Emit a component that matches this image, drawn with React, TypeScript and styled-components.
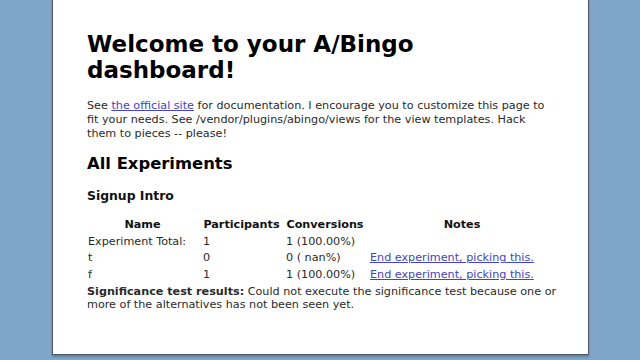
import React from 'react';
import styled, { createGlobalStyle } from 'styled-components';

const GlobalStyle = createGlobalStyle`
  html, body {
    margin: 0;
    padding: 0;
    background: #7fa6c8;
    font-family: "DejaVu Sans", Verdana, sans-serif;
    color: #222;
  }
`;

const Page = styled.div`
  width: 640px;
  height: 360px;
  overflow: hidden;
`;

const Panel = styled.div`
  box-sizing: border-box;
  margin-left: 52px;
  width: 537px;
  height: 355px;
  background: #fff;
  border: 1px solid #4d5866;
  border-top: none;
  box-shadow: 0 2px 2px rgba(40, 60, 80, 0.35);
  padding: 31px 10px 0 34px;
`;

const Title = styled.h1`
  margin: 0;
  font-size: 23px;
  line-height: 26px;
  font-weight: bold;
  color: #000;
`;

const Intro = styled.p`
  margin: 16px 0 0;
  font-size: 11.2px;
  line-height: 14px;
  color: #2a2a2a;
`;

const Link = styled.a`
  color: #4343c4;
  text-decoration: underline;
`;

const SectionTitle = styled.h2`
  margin: 12px 0 0;
  font-size: 16.4px;
  line-height: 22px;
  font-weight: bold;
  color: #000;
`;

const SubTitle = styled.h3`
  margin: 13px 0 0;
  font-size: 12.4px;
  line-height: 16px;
  font-weight: bold;
  color: #111;
`;

const Table = styled.table`
  margin-top: 12px;
  border-collapse: collapse;
  table-layout: fixed;
  font-size: 11.2px;
  color: #2a2a2a;
`;

const Th = styled.th`
  padding: 0 4px 0 0;
  height: 17px;
  font-weight: bold;
  text-align: center;
  color: #111;
`;

const Td = styled.td`
  padding: 0 1px;
  height: 16.6px;
  text-align: left;
  white-space: pre;
`;

const Summary = styled.p`
  margin: 2px 0 0;
  font-size: 11.2px;
  line-height: 13.5px;
  color: #2a2a2a;
`;

const rows = [
  { name: 'Experiment Total:', participants: '1', conversions: '1 (100.00%)', note: false },
  { name: 't', participants: '0', conversions: '0 ( nan%)', note: true },
  { name: 'f', participants: '1', conversions: '1 (100.00%)', note: true },
];

const colWidths = [115, 83, 84, 190];

export default function App() {
  return (
    <Page>
      <GlobalStyle />
      <Panel>
        <Title>
          Welcome to your A/Bingo
          <br />
          dashboard!
        </Title>
        <Intro>
          See <Link href="#">the official site</Link> for documentation. I encourage you to customize this page to
          <br />
          fit your needs. See /vendor/plugins/abingo/views for the view templates. Hack
          <br />
          them to pieces -- please!
        </Intro>
        <SectionTitle>All Experiments</SectionTitle>
        <SubTitle>Signup Intro</SubTitle>
        <Table>
          <colgroup>
            {colWidths.map((w, i) => (
              <col key={i} style={{ width: w }} />
            ))}
          </colgroup>
          <thead>
            <tr>
              <Th>Name</Th>
              <Th>Participants</Th>
              <Th>Conversions</Th>
              <Th>Notes</Th>
            </tr>
          </thead>
          <tbody>
            {rows.map((r) => (
              <tr key={r.name}>
                <Td>{r.name}</Td>
                <Td>{r.participants}</Td>
                <Td>{r.conversions}</Td>
                <Td>{r.note ? <Link href="#">End experiment, picking this.</Link> : null}</Td>
              </tr>
            ))}
          </tbody>
        </Table>
        <Summary>
          <b>Significance test results:</b> Could not execute the significance test because one or
          <br />
          more of the alternatives has not been seen yet.
        </Summary>
      </Panel>
    </Page>
  );
}
